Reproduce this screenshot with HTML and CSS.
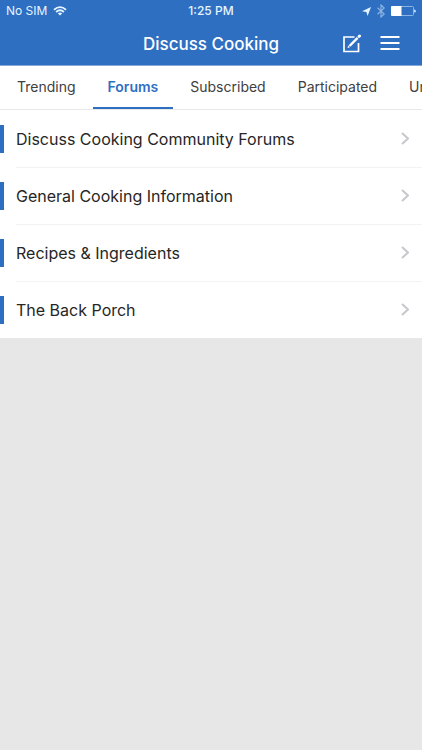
FILE: index.html
```html
<!DOCTYPE html>
<html lang="en">
<head>
<meta charset="utf-8">
<meta name="viewport" content="width=device-width, initial-scale=1">
<title>Discuss Cooking</title>
<link rel="stylesheet" href="styles.css">
</head>
<body>
<header class="header">
  <div class="status">
    <div class="carrier">
      <span>No SIM</span>
      <svg class="wifi" viewBox="0 0 14 10" width="14" height="10" fill="none" stroke="currentColor" stroke-width="1.8" aria-hidden="true">
        <path d="M1 3.7Q7-1.5 13 3.7M3.1 6Q7 2.6 10.9 6"/>
        <path d="M4.8 7.4Q7 5.6 9.2 7.4L7 9.6Z" fill="currentColor" stroke="none"/>
      </svg>
    </div>
    <time class="clock">1:25 PM</time>
    <div class="indicators">
      <svg viewBox="0 0 9 9" width="9" height="9" fill="currentColor" aria-hidden="true"><path d="M9 0L5.6 9L4.4 4.9L0 4.2Z"/></svg>
      <svg class="bluetooth" viewBox="0 0 8 14" width="8" height="14" fill="none" stroke="currentColor" stroke-width="1.2" aria-hidden="true"><path d="M.5 3.8L7.2 10L4 13V1L7.2 4L.5 10.2"/></svg>
      <svg viewBox="0 0 25 10" width="25" height="10" aria-hidden="true">
        <rect x=".5" y=".5" width="22" height="9" rx="1" fill="none" stroke="#8cb3e3"/>
        <path d="M1 0H10.500V10H1Q0 10 0 9V1Q0 0 1 0Z" fill="#fff"/>
        <path d="M23 3.500Q25 3.500 25 5T23 6.500Z" fill="#c0dbfa"/>
      </svg>
    </div>
  </div>
  <div class="bar">
    <h1 class="title">Discuss Cooking</h1>
    <div class="actions">
      <button class="action" type="button" aria-label="New topic">
        <svg viewBox="0 0 20 20" width="20" height="20" fill="none" stroke="currentColor" aria-hidden="true">
          <path d="M12.500 3H2V17.500H16.500V9" stroke-width="1.700"/>
          <path d="M7.500 12L15.600 3.900" stroke-width="2.400"/>
          <path d="M17 2.500L17.600 1.900" stroke-width="2.800" stroke-linecap="round"/>
          <path d="M5.500 14L6.200 11.500L8 13.300Z" fill="currentColor" stroke="none"/>
        </svg>
      </button>
      <button class="action" type="button" aria-label="Menu">
        <svg viewBox="0 0 20 20" width="20" height="20" fill="none" stroke="currentColor" stroke-width="2" aria-hidden="true"><path d="M.5 3H19.500M.5 9H19.500M.5 15H19.500"/></svg>
      </button>
    </div>
  </div>
</header>
<nav class="tabs">
  <a class="tab" href="#trending">Trending</a>
  <a class="tab active" href="#forums" aria-current="page">Forums</a>
  <a class="tab" href="#subscribed">Subscribed</a>
  <a class="tab" href="#participated">Participated</a>
  <a class="tab" href="#unread">Unread</a>
</nav>
<main>
  <ul class="forums">
    <li><a class="forum" href="#community"><span class="name">Discuss Cooking Community Forums</span><svg class="chevron" viewBox="0 0 8 13" width="8" height="13" aria-hidden="true"><path d="M1 1L7 6.500L1 12"/></svg></a></li>
    <li><a class="forum" href="#general"><span class="name">General Cooking Information</span><svg class="chevron" viewBox="0 0 8 13" width="8" height="13" aria-hidden="true"><path d="M1 1L7 6.500L1 12"/></svg></a></li>
    <li><a class="forum" href="#recipes"><span class="name">Recipes &amp; Ingredients</span><svg class="chevron" viewBox="0 0 8 13" width="8" height="13" aria-hidden="true"><path d="M1 1L7 6.500L1 12"/></svg></a></li>
    <li><a class="forum" href="#porch"><span class="name">The Back Porch</span><svg class="chevron" viewBox="0 0 8 13" width="8" height="13" aria-hidden="true"><path d="M1 1L7 6.500L1 12"/></svg></a></li>
  </ul>
</main>
</body>
</html>
```
FILE: styles.css
```css
* {
  box-sizing: border-box;
}

body {
  margin: 0;
  background: #e7e7e7;
  color: #262626;
  font-family: Inter, Roboto, sans-serif;
}

a {
  color: inherit;
  text-decoration: none;
}

svg {
  display: block;
  flex: none;
}

.header {
  background: #2e6fc2;
  color: #fff;
  border-bottom: 1px solid #84a9dc;
}

.status {
  display: grid;
  grid-template-columns: 1fr auto 1fr;
  align-items: center;
  height: 22px;
  padding: 0 6px;
  font-size: 12px;
  line-height: 16px;
  color: #e6f4ff;
}

.carrier {
  display: flex;
  align-items: center;
  gap: 6px;
}

.clock {
  font-weight: 500;
}

.indicators {
  display: flex;
  align-items: center;
  justify-content: flex-end;
  gap: 6px;
}

.bluetooth {
  color: #8cb3e3;
}

.bar {
  display: grid;
  grid-template-columns: 1fr auto 1fr;
  align-items: center;
  height: 43px;
  padding: 0 22px;
}

.title {
  grid-column: 2;
  margin: 0;
  font-size: 17px;
  line-height: 24px;
  font-weight: 500;
}

.actions {
  display: flex;
  justify-content: flex-end;
  gap: 18px;
}

.action {
  padding: 0;
  border: 0;
  background: none;
  color: #fff;
}

.tabs {
  display: flex;
  gap: 2px;
  height: 44px;
  padding-left: 2px;
  overflow: hidden;
  background: #fff;
  border-bottom: 1px solid #e7e7e7;
  font-size: 14px;
  line-height: 20px;
  color: #404040;
}

.tab {
  flex: none;
  padding: 11px 15px 9px;
  border-bottom: 2px solid transparent;
}

.tab.active {
  color: #2e6fc2;
  border-color: #2e6fc2;
  font-weight: 600;
}

.forums {
  margin: 0;
  padding: 0;
  list-style: none;
  background: #fff;
}

.forum {
  display: flex;
  align-items: center;
  height: 57px;
}

.forum::before {
  content: "";
  width: 4px;
  height: 28px;
  margin-right: 12px;
  background: #2e6fc2;
}

.name {
  flex: 1;
  font-size: 16px;
  line-height: 22px;
}

.chevron {
  margin-right: 13px;
  fill: none;
  stroke: #c7c7cc;
  stroke-width: 2;
}

.forums li + li {
  background: linear-gradient(#f3f3f3, #f3f3f3) 16px 0 / 100% 1px no-repeat;
}
```
